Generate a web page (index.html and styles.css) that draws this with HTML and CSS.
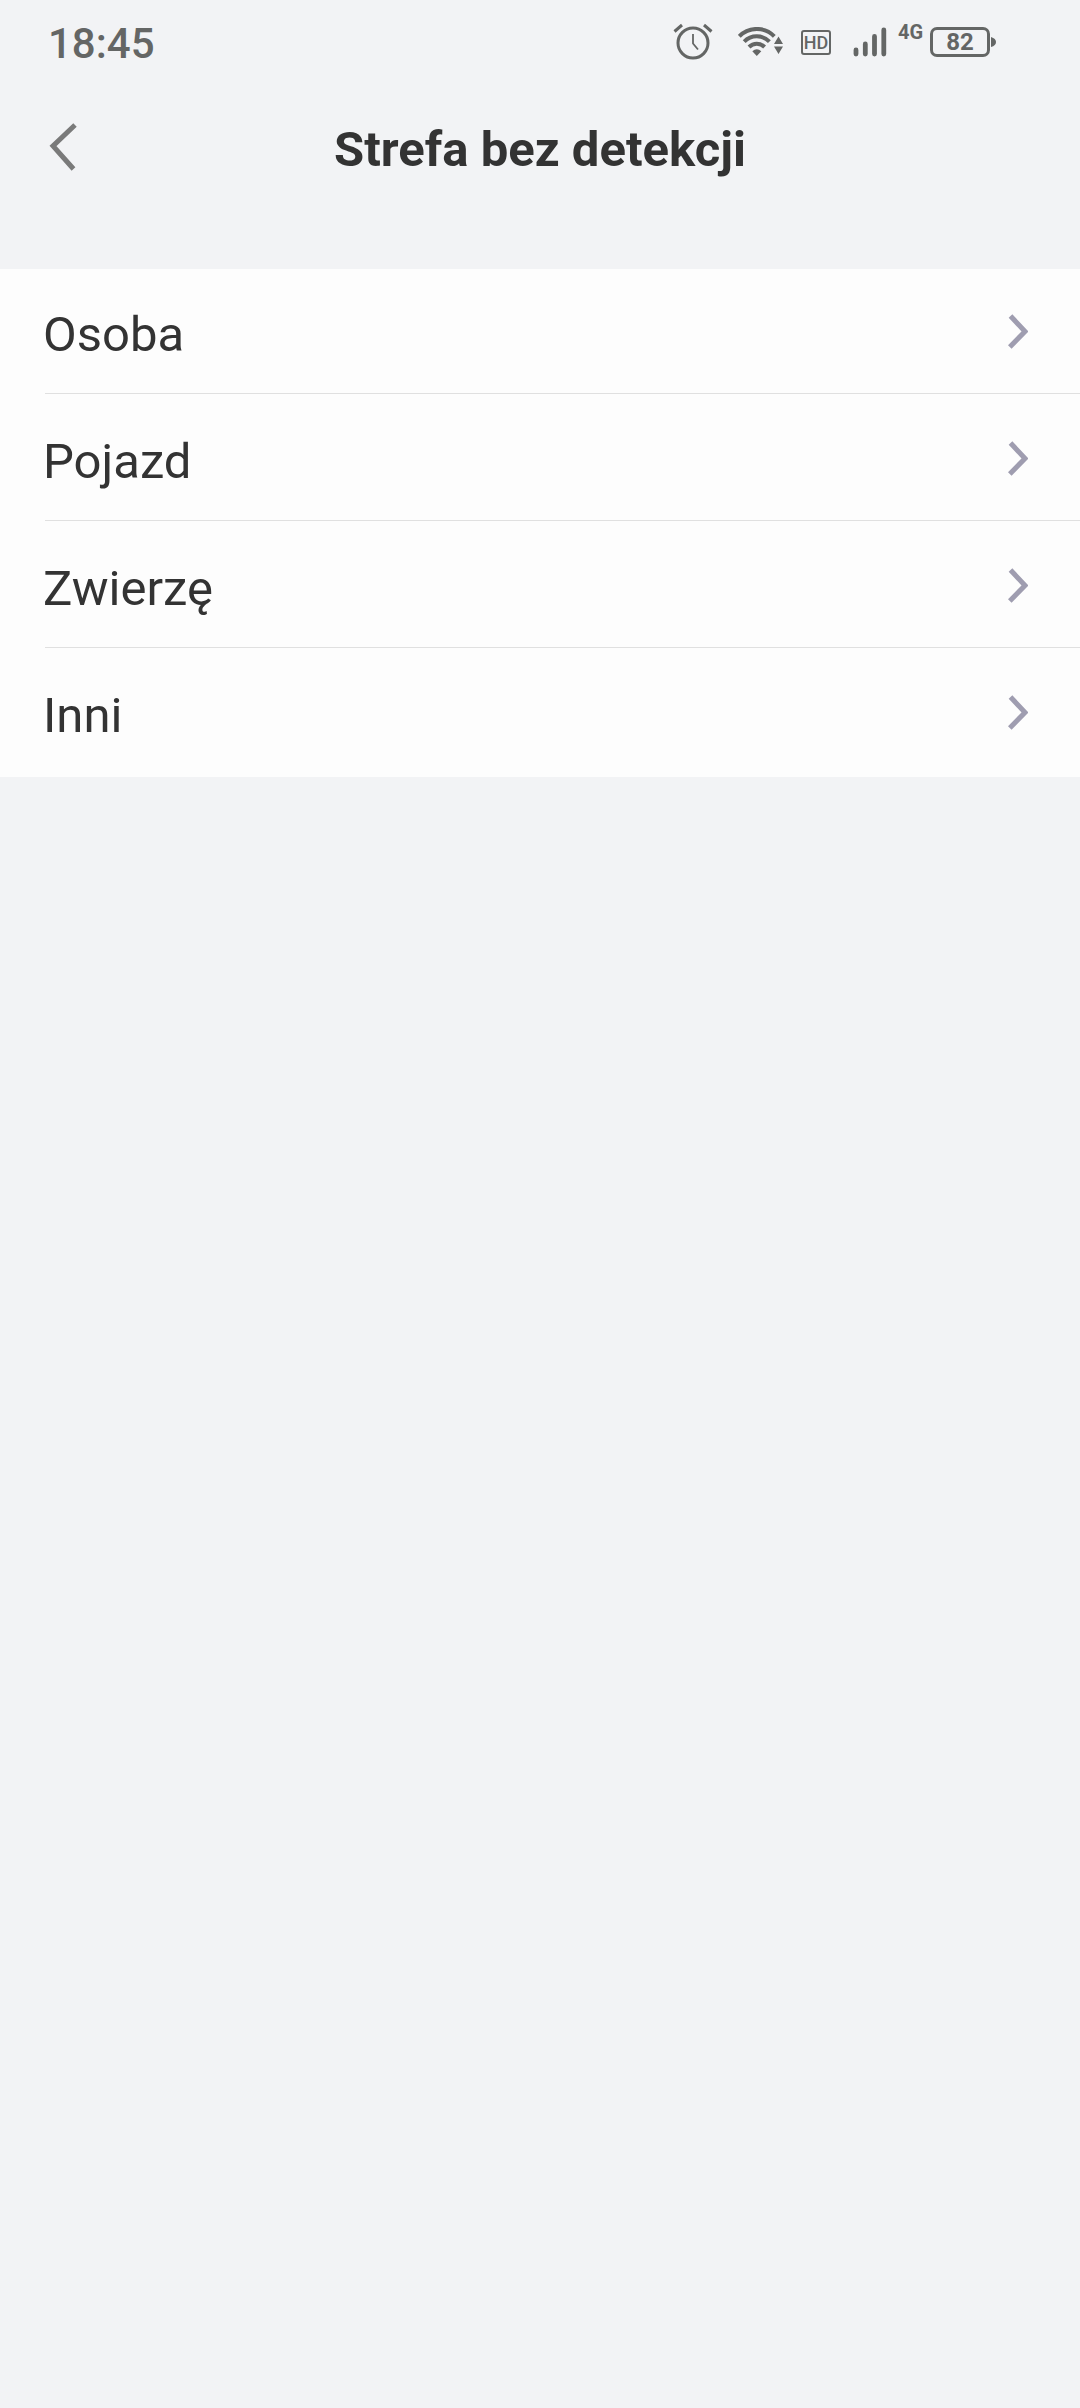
FILE: index.html
```html
<!DOCTYPE html>
<html lang="pl">
<head>
<meta charset="utf-8">
<meta name="viewport" content="width=device-width, initial-scale=1">
<title>Strefa bez detekcji</title>
<link rel="stylesheet" href="styles.css">
</head>
<body>
<div class="status-bar">
  <time class="clock">18:45</time>
  <div class="indicators">
    <svg class="alarm" width="40" height="38" viewBox="0 0 40 38" fill="none" stroke="currentColor" stroke-width="3" aria-hidden="true">
      <circle cx="20" cy="20" r="15"/>
      <path d="M1.500 8.500 9 2M31 2l7.500 6.500"/>
      <path d="M20 11v9.500l5 6" stroke-width="1.800"/>
    </svg>
    <svg class="wifi" width="46" height="30" viewBox="0 0 46 30" aria-hidden="true">
      <g fill="none" stroke="currentColor" stroke-width="4">
        <path d="M1.300 9.300a24.500 24.500 0 0 1 35 0"/>
        <path d="M6.200 14.700a17.500 17.500 0 0 1 25.200 0"/>
        <path d="M11 20a11 11 0 0 1 15.600 0"/>
      </g>
      <path fill="currentColor" d="M14.300 24.200q4.500-4 9 0L18.800 29zM40.500 9.500l4.500 7.500h-9zM36 19.500h9L40.500 27z"/>
    </svg>
    <span class="hd">HD</span>
    <svg class="signal" width="34" height="30" viewBox="0 0 34 30" fill="none" stroke="currentColor" stroke-width="4.800" stroke-linecap="round" aria-hidden="true">
      <path d="M3 23v4M12.300 17v10M21.500 9.500V27M30.800 3v24"/>
    </svg>
    <span class="network">4G</span>
    <span class="battery">82</span>
    <svg width="6" height="10" viewBox="0 0 6 10" fill="currentColor" aria-hidden="true"><path d="M1 0q5 1.500 5 5T1 10z"/></svg>
  </div>
</div>
<header class="nav">
  <button class="back" type="button" aria-label="Wstecz">
    <svg width="30" height="50" viewBox="0 0 30 50" fill="none" stroke="currentColor" stroke-width="5" aria-hidden="true"><path d="M27 2 5 23 25.500 46"/></svg>
  </button>
  <h1 class="title">Strefa bez detekcji</h1>
</header>
<main>
  <ul class="list">
    <li><a class="row" href="#osoba"><span>Osoba</span><svg class="chevron" width="20" height="36" viewBox="0 0 20 36"><path d="M2.500 2 17 17.500 1.800 33"/></svg></a></li>
    <li><a class="row" href="#pojazd"><span>Pojazd</span><svg class="chevron" width="20" height="36" viewBox="0 0 20 36"><path d="M2.500 2 17 17.500 1.800 33"/></svg></a></li>
    <li><a class="row" href="#zwierze"><span>Zwierzę</span><svg class="chevron" width="20" height="36" viewBox="0 0 20 36"><path d="M2.500 2 17 17.500 1.800 33"/></svg></a></li>
    <li><a class="row" href="#inni"><span>Inni</span><svg class="chevron" width="20" height="36" viewBox="0 0 20 36"><path d="M2.500 2 17 17.500 1.800 33"/></svg></a></li>
  </ul>
</main>
</body>
</html>
```

FILE: styles.css
```css
* {
  box-sizing: border-box;
}

body {
  margin: 0;
  min-height: 100vh;
  background: #f2f3f5;
  color: #333;
  font-family: Roboto, sans-serif;
}

.status-bar {
  display: flex;
  align-items: center;
  justify-content: space-between;
  height: 84px;
  padding: 0 84px 0 48px;
  color: #646665;
}

.clock {
  font-size: 42px;
  line-height: 48px;
  font-weight: 500;
  padding-top: 3px;
}

.indicators {
  display: flex;
  align-items: center;
}

.wifi {
  margin-left: 25px;
}

.hd {
  display: flex;
  justify-content: center;
  width: 30px;
  margin: 0 22px 0 17px;
  border: 2px solid;
  border-radius: 3px;
  font-size: 18px;
  line-height: 21px;
  font-weight: 500;
}

.network {
  width: 27px;
  margin: 0 5px 0 11px;
  padding-bottom: 20px;
  font-size: 20px;
  line-height: 20px;
  font-weight: 700;
}

.battery {
  width: 60px;
  border: 3px solid;
  border-radius: 7px;
  font-size: 24px;
  line-height: 24px;
  font-weight: 700;
  text-align: center;
}

.nav {
  display: grid;
  grid-template-columns: 124px 1fr 124px;
  align-items: center;
  height: 132px;
  margin-bottom: 53px;
}

.back {
  display: flex;
  padding: 0 46px 4px 48px;
  border: 0;
  background: none;
  color: #7a7a7a;
}

.title {
  margin: 0;
  font-size: 49px;
  line-height: 58px;
  font-weight: 700;
  text-align: center;
}

.list {
  margin: 0;
  padding: 0 0 3px 43px;
  list-style: none;
  background: #fdfdfd;
}

.list li + li::before {
  content: "";
  display: block;
  height: 1px;
  margin-left: 2px;
  background: #e0e0e0;
}

.row {
  display: flex;
  align-items: center;
  justify-content: space-between;
  height: 126px;
  padding: 9px 52px 0 0;
  color: inherit;
  font-size: 49px;
  line-height: 58px;
  text-decoration: none;
}

.list li:first-child .row {
  height: 124px;
  padding-top: 7px;
}

.chevron {
  margin-bottom: 6px;
  fill: none;
  stroke: #9f9db0;
  stroke-width: 5;
}
```
